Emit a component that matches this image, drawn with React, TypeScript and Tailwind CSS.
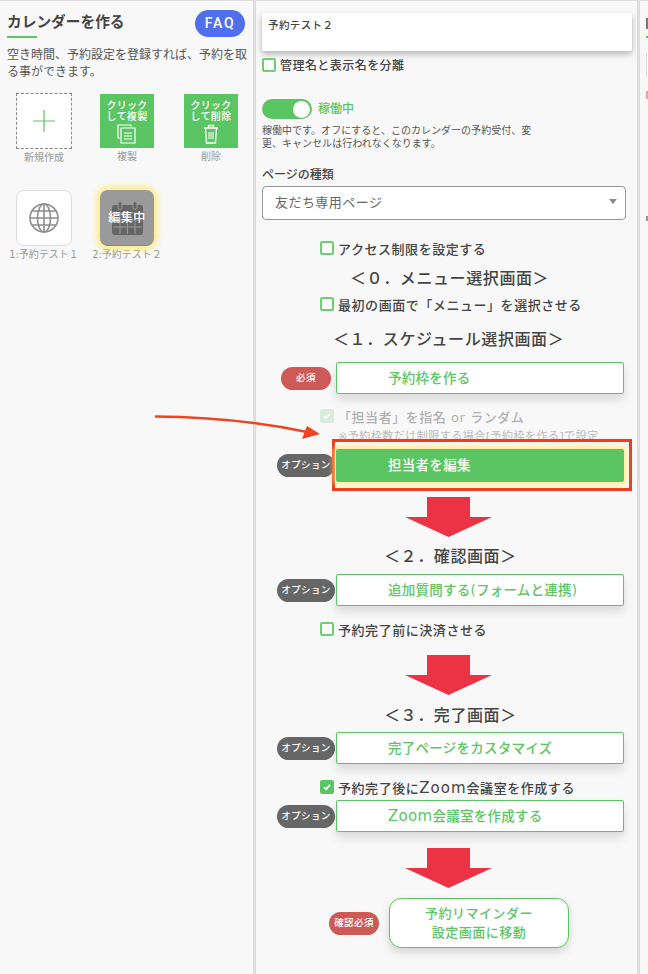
import React from "react";

const font = "[font-family:'DejaVu_Sans','Noto_Sans_CJK_JP',sans-serif]";

const Check = ({ checked = false }: { checked?: boolean }) =>
  checked ? (
    <span className="w-[14px] h-[14px] shrink-0 rounded-[2px] bg-[#5cc563] flex items-center justify-center">
      <svg width="10" height="10" viewBox="0 0 10 10" fill="none" stroke="white" strokeWidth="1.8">
        <path d="M2 5.2 4.1 7.2 8 2.8" />
      </svg>
    </span>
  ) : (
    <span className="w-[14px] h-[14px] shrink-0 rounded-[2px] border-2 border-[#6ccf73] bg-white/40" />
  );

const CheckRow = ({ label, checked, className = "" }: { label: React.ReactNode; checked?: boolean; className?: string }) => (
  <div className={`ml-[64px] h-[14px] flex items-center gap-[4px] ${className}`}>
    <Check checked={checked} />
    <span className="text-[13px] leading-none tracking-[0.55px] font-medium text-[#444] whitespace-nowrap mt-[3px]">{label}</span>
  </div>
);

const Heading = ({ children, className = "" }: { children: string; className?: string }) => (
  <div className={`h-[20px] flex items-center text-[16px] leading-none tracking-[0.6px] font-medium text-[#444] whitespace-nowrap ${className}`}>
    {children}
  </div>
);

const Badge = ({ label, red = false, wide = false }: { label: string; red?: boolean; wide?: boolean }) => (
  <span
    className={`h-[23px] rounded-full flex items-center justify-center text-[9.5px] font-medium tracking-[0.4px] text-white whitespace-nowrap ${
      red ? "bg-[#cd5a57]" : "bg-[#666666]"
    } ${wide ? "w-[58px] mr-[1px]" : "w-[50px] mr-[5px]"}`}
  >
    {label}
  </span>
);

const StepButton = ({ label }: { label: React.ReactNode }) => (
  <div className="w-[288px] h-[32px] pl-[51px] flex items-center bg-white border border-[#5cc563] rounded-[2px] shadow-[0_6px_10px_rgba(0,0,0,0.12)] text-[13.5px] tracking-[0.25px] font-medium text-[#5cc563] whitespace-nowrap">
    <span>{label}</span>
  </div>
);

const Row = ({ badge, className = "", children }: { badge: React.ReactNode; className?: string; children: React.ReactNode }) => (
  <div className={`flex items-center justify-end pr-[13px] ${className}`}>
    {badge}
    {children}
  </div>
);

const DownArrow = ({ className = "" }: { className?: string }) => (
  <svg className={`block ml-[149px] ${className}`} width="87" height="40" viewBox="0 0 87 40">
    <path d="M22 0H65V20H87L43.5 40 0 20H22Z" fill="#ec3344" />
  </svg>
);

const GreenTile = ({ line2, icon, label, className = "" }: { line2: string; icon: React.ReactNode; label: string; className?: string }) => (
  <div className={`w-[54px] mt-[1px] flex flex-col items-center ${className}`}>
    <div className="w-[54px] h-[54px] bg-[#5cc563] flex flex-col items-center pt-[6px] text-white text-[10px] leading-[11px] font-medium tracking-[0.3px] text-center">
      <span>クリック</span>
      <span>{line2}</span>
      {icon}
    </div>
    <span className="mt-[2px] text-[10px] leading-[14px] text-[#999] whitespace-nowrap">{label}</span>
  </div>
);

export default function App() {
  return (
    <div className={`relative w-[648px] h-[974px] overflow-hidden flex bg-[#f8f8f8] border-t border-[#e0e0e0] ${font}`}>
      {/* left column */}
      <div className="w-[253px] shrink-0 pl-[7px] pr-[6px]">
        <div className="flex justify-between items-start pt-[9px]">
          <div>
            <div className="h-[25px] flex items-center text-[14.7px] font-bold text-[#444] whitespace-nowrap">カレンダーを作る</div>
            <div className="w-[30px] h-[2px] mt-[1px] bg-[#5cc563]" />
          </div>
          <div className="w-[50px] h-[27px] mr-[2px] rounded-full bg-[#4f6fec] flex items-center justify-center text-white text-[14px] font-medium tracking-[1.8px] [font-family:Roboto,sans-serif]">
            FAQ
          </div>
        </div>
        <p className="mt-[9px] text-[12px] leading-[17px] text-[#555]">空き時間、予約設定を登録すれば、予約を取る事ができます。</p>

        <div className="mt-[12px] ml-[9px] flex items-start">
          <div className="w-[56px] flex flex-col items-center">
            <div className="w-[56px] h-[56px] bg-white border border-dashed border-[#888] flex items-center justify-center">
              <svg width="22" height="22" viewBox="0 0 22 22" stroke="#5cc563" strokeWidth="1.2">
                <path d="M11 0V22M0 11H22" />
              </svg>
            </div>
            <span className="mt-[2px] text-[10px] leading-[14px] text-[#999] whitespace-nowrap">新規作成</span>
          </div>
          <GreenTile
            className="ml-[28px]"
            line2="して複製"
            label="複製"
            icon={
              <svg className="mt-[2px]" width="20" height="20" viewBox="0 0 20 20" fill="none" stroke="white" strokeWidth="1.2">
                <path d="M14 2.5V1H1V14H3" />
                <path d="M4 4H18V19H4Z" />
                <path d="M7 9H15M7 12H15M7 15H15" />
              </svg>
            }
          />
          <GreenTile
            className="ml-[30px]"
            line2="して削除"
            label="削除"
            icon={
              <svg className="mt-[2px]" width="16" height="20" viewBox="0 0 16 20" fill="none" stroke="white" strokeWidth="1.3">
                <path d="M1 4H15M5.5 4V1.5H10.5V4" />
                <path d="M2.5 4 3.5 19H12.5L13.5 4" />
                <path d="M6 8V15M8 8V15M10 8V15" strokeWidth="1" />
              </svg>
            }
          />
        </div>

        <div className="mt-[25px] ml-[9px] flex gap-[28px] items-start">
          <div className="w-[56px] flex flex-col items-center">
            <div className="w-[56px] h-[56px] bg-white border border-[#ddd] rounded-[8px] flex items-center justify-center">
              <svg width="30" height="30" viewBox="0 0 30 30" fill="none" stroke="#8f8f8f" strokeWidth="1.6">
                <circle cx="15" cy="15" r="14" />
                <ellipse cx="15" cy="15" rx="6.5" ry="14" />
                <path d="M15 1V29M1 15H29M3.2 8H26.8M3.2 22H26.8" />
              </svg>
            </div>
            <span className="mt-[2px] text-[10px] leading-[14px] text-[#999] whitespace-nowrap">1:予約テスト１</span>
          </div>
          <div className="w-[54px] flex flex-col items-center">
            <div className="relative w-[54px] h-[56px] rounded-[8px] bg-[#9a9a9a] border-b border-[#888] shadow-[0_0_6px_3px_rgba(255,230,80,0.75)] flex items-center justify-center">
              <svg width="31" height="34" viewBox="0 0 31 34" fill="none">
                <path d="M3 4H28A3 3 0 0 1 31 7V31A3 3 0 0 1 28 34H3A3 3 0 0 1 0 31V7A3 3 0 0 1 3 4Z" fill="#666" />
                <path d="M1 12H30M1 19H30M1 26H30M8 12V33M15.500 12V33M23 12V33" stroke="#9a9a9a" strokeWidth="1" />
                <rect x="6" y="0.500" width="4" height="8" rx="2" fill="#666" stroke="#9a9a9a" />
                <rect x="21" y="0.500" width="4" height="8" rx="2" fill="#666" stroke="#9a9a9a" />
              </svg>
              <span className="absolute text-white text-[12px] font-medium tracking-[0.5px] whitespace-nowrap">編集中</span>
            </div>
            <span className="mt-[2px] text-[10px] leading-[14px] text-[#999] whitespace-nowrap">2:予約テスト２</span>
          </div>
        </div>
      </div>

      <div className="w-[3px] shrink-0 bg-[#dddddd]" />

      {/* middle column */}
      <div className="w-[381px] shrink-0 pt-[12px]">
        <div className="ml-[6px] w-[370px] h-[38px] bg-white rounded-[2px] shadow-[0_3px_6px_rgba(0,0,0,0.28)] pl-[6px] pt-[5px] text-[10.5px] leading-[14px] font-medium tracking-[0.4px] text-[#444]">
          予約テスト２
        </div>
        <div className="ml-[6px] mt-[7px] h-[14px] flex items-center gap-[4px]">
          <Check />
          <span className="text-[12px] leading-none font-medium tracking-[0.45px] text-[#444] mt-[2px]">管理名と表示名を分離</span>
        </div>

        <div className="ml-[6px] mt-[27px] flex items-center gap-[6px]">
          <div className="w-[50px] h-[20px] rounded-full bg-[#5cc563] flex items-center justify-end pr-[2px]">
            <span className="w-[17px] h-[17px] rounded-full bg-white" />
          </div>
          <span className="text-[12px] font-medium text-[#5cc563]">稼働中</span>
        </div>
        <p className="ml-[6px] mt-[5px] w-[276px] text-[10px] leading-[13px] tracking-[0.02px] text-[#555]">
          稼働中です。オフにすると、このカレンダーの予約受付、変更、キャンセルは行われなくなります。
        </p>

        <div className="ml-[6px] mt-[17px] h-[16px] flex items-center text-[12px] font-medium text-[#444]">ページの種類</div>
        <div className="relative ml-[6px] mt-[3px] w-[364px] h-[34px] bg-white border border-[#999] rounded-[4px] pl-[12px] flex items-center text-[13px] tracking-[0.45px] text-[#666]">
          友だち専用ページ
          <span className="absolute right-[8px] top-[12px] w-0 h-0 border-x-[4px] border-x-transparent border-t-[5px] border-t-[#888]" />
        </div>

        <CheckRow label="アクセス制限を設定する" className="mt-[21px]" />
        <Heading className="ml-[94px] mt-[14px]">＜０．メニュー選択画面＞</Heading>
        <CheckRow label="最初の画面で「メニュー」を選択させる" className="mt-[8px]" />
        <Heading className="ml-[77px] mt-[19px]">＜１．スケジュール選択画面＞</Heading>

        <Row className="mt-[12px]" badge={<Badge label="必須" red />}>
          <StepButton label="予約枠を作る" />
        </Row>

        <div className="opacity-40">
          <CheckRow label="「担当者」を指名 or ランダム" checked className="mt-[15px] [&>span:first-child]:opacity-50" />
        </div>
        <div className="ml-[82px] mt-[6px] h-[14px] flex items-center text-[11px] leading-none tracking-[0.5px] text-[#bbb] whitespace-nowrap">
          ※予約枠数だけ制限する場合[予約枠を作る]で設定
        </div>

        <Row className="mt-[6px]" badge={<Badge label="オプション" wide />}>
          <div className="relative w-[288px] h-[33px]">
            <div className="absolute -left-[4px] -right-[8px] -top-[10px] -bottom-[9px] border-[3px] border-[#ee3a1f] bg-[#f8f8f8]" />
            <div className="absolute inset-0 pl-[52px] flex items-center bg-[#5cc563] rounded-[2px] shadow-[0_0_5px_3px_rgba(255,235,110,0.7)] text-[13.5px] tracking-[0.3px] font-medium text-white whitespace-nowrap">
              担当者を編集
            </div>
          </div>
        </Row>

        <DownArrow className="mt-[15px]" />
        <Heading className="ml-[128px] mt-[10px]">＜２．確認画面＞</Heading>
        <Row className="mt-[7px]" badge={<Badge label="オプション" wide />}>
          <StepButton label="追加質問する(フォームと連携)" />
        </Row>
        <CheckRow label="予約完了前に決済させる" className="mt-[16px]" />
        <DownArrow className="mt-[19px]" />
        <Heading className="ml-[128px] mt-[11px]">＜３．完了画面＞</Heading>
        <Row className="mt-[6px]" badge={<Badge label="オプション" wide />}>
          <StepButton label="完了ページをカスタマイズ" />
        </Row>
        <CheckRow
          label={
            <>
              予約完了後に<span className="text-[15px] tracking-[1px]">Zoom</span>会議室を作成する
            </>
          }
          checked
          className="mt-[16px]"
        />
        <Row className="mt-[6px]" badge={<Badge label="オプション" wide />}>
          <StepButton
            label={
              <>
                <span className="text-[15px] tracking-[0.3px]">Zoom</span>会議室を作成する
              </>
            }
          />
        </Row>
        <DownArrow className="mt-[16px]" />

        <div className="ml-[73px] mt-[10px] flex items-center">
          <Badge label="確認必須" red />
          <div className="ml-[5px] w-[180px] h-[50px] bg-white border border-[#5cc563] rounded-[12px] shadow-[0_4px_8px_rgba(0,0,0,0.15)] flex items-center justify-center text-center text-[13px] leading-[19px] tracking-[0.5px] font-medium text-[#5cc563]">
            予約リマインダー
            <br />
            設定画面に移動
          </div>
        </div>
      </div>

      <div className="w-[3px] shrink-0 bg-[#dddddd]" />

      {/* right column, only its left edge is in the window */}
      <div className="flex-1 pl-[6px] pt-[17px] overflow-hidden">
        <div className="w-[2px] h-[11px] bg-[#777]" />
        <div className="w-[2px] h-[2px] mt-[7px] bg-[#5cc563]" />
        <div className="mt-[15px] w-[2px] h-[24px] bg-white border-l border-[#ddd]" />
        <div className="mt-[14px] w-[2px] h-[8px] bg-[#e8a0a0]" />
        <div className="mt-[117px] w-[2px] h-[5px] bg-[#999]" />
      </div>

      {/* annotation arrow */}
      <svg className="absolute left-0 top-0 pointer-events-none" width="648" height="974" fill="none">
        <path d="M155 415.500C210 416 260 421 307 431" stroke="#ee4422" strokeWidth="2.5" />
        <path d="M320 433 307 425 302 438Z" fill="#ee4422" />
      </svg>
    </div>
  );
}
